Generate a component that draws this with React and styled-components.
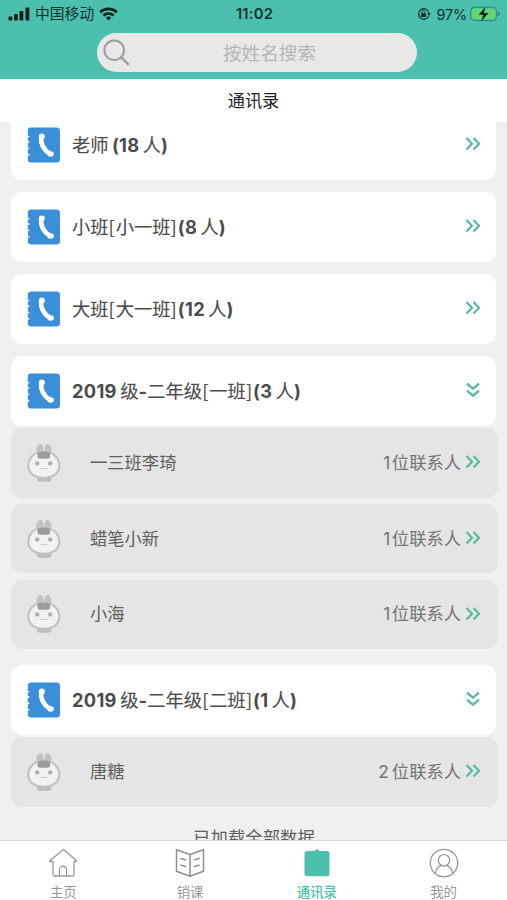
import React from "react";
import styled, { createGlobalStyle } from "styled-components";

const GlobalStyle = createGlobalStyle`
  * {
    box-sizing: border-box;
  }
  body {
    margin: 0;
    background: #f0f0f0;
    font-family: Inter, "Noto Sans CJK SC", sans-serif;
  }
`;

const groups = [
  { id: 1, name: "老师 (18 人)" },
  { id: 2, name: "小班[小一班](8 人)" },
  { id: 3, name: "大班[大一班](12 人)" },
  {
    id: 4,
    name: "2019 级-二年级[一班](3 人)",
    open: true,
    members: [
      { name: "一三班李琦", count: "1" },
      { name: "蜡笔小新", count: "1" },
      { name: "小海", count: "1" },
    ],
  },
  {
    id: 5,
    name: "2019 级-二年级[二班](1 人)",
    open: true,
    members: [{ name: "唐糖", count: "2" }],
  },
];

const Screen = styled.div`
  height: 900px;
  width: 507px;
  display: flex;
  flex-direction: column;
  overflow: hidden;
`;

const Header = styled.header`
  height: 79px;
  flex: none;
  background: #4bc1ad;
`;

const StatusBar = styled.div`
  height: 28px;
  display: grid;
  grid-template-columns: 1fr auto 1fr;
  align-items: center;
  padding: 0 6px 0 8px;
  color: #14322d;
  font-size: 15px;
`;

const StatusSide = styled.div`
  display: flex;
  align-items: center;
  justify-content: ${(props) => (props.$end ? "flex-end" : "flex-start")};
  gap: 5px;
  white-space: nowrap;
`;

const Carrier = styled.span`
  font-size: 14.8px;
  line-height: 20px;
`;

const Clock = styled.span`
  font-weight: 600;
  font-size: 14.8px;
  letter-spacing: 0.2px;
  line-height: 18px;
  padding-bottom: 1px;
`;

const Battery = styled.span`
  font-size: 14.4px;
  letter-spacing: -0.1px;
  margin-right: -2px;
`;

const SearchBox = styled.div`
  width: 320px;
  height: 39px;
  margin: 5px 0 0 97px;
  padding: 0 6px;
  border-radius: 20px;
  background: #e8e8e8;
  display: flex;
  align-items: center;
`;

const Placeholder = styled.span`
  flex: 1;
  padding-right: 2px;
  text-align: center;
  font-size: 18.6px;
  line-height: 38px;
  color: #b5b5b5;
`;

const PageTitle = styled.h1`
  height: 43px;
  flex: none;
  margin: 0;
  background: #fff;
  color: #222;
  font-size: 17.2px;
  font-weight: 400;
  line-height: 43px;
  text-align: center;
`;

const List = styled.main`
  flex: 1;
  min-height: 0;
  overflow: hidden;
  padding: 0 10px 0 11px;
`;

const Group = styled.section`
  margin-bottom: ${(props) => (props.$open ? "15.8px" : "12.4px")};

  &:first-child {
    margin-top: -12px;
  }
`;

const Card = styled.div`
  height: 69.6px;
  margin-right: 1px;
  padding: 0 14px 0 16px;
  border-radius: 11px;
  background: #fff;
  display: flex;
  align-items: center;
`;

const GroupName = styled.h2`
  flex: 1;
  margin: 0 0 0 12px;
  font-size: 18.3px;
  font-weight: 400;
  line-height: 26px;
  color: #4c4c4c;
  -webkit-text-stroke: 0.15px #4c4c4c;
  white-space: pre;
  word-spacing: -1.8px;
`;

const Latin = styled.span`
  font-weight: 700;
  letter-spacing: 0.3px;
  -webkit-text-stroke: 0;
`;

const Bracket = styled.span`
  font-family: "Noto Sans CJK SC", sans-serif;
  letter-spacing: 1px;
`;

const Member = styled.div`
  height: 69.6px;
  margin-top: 6.1px;
  margin-right: -1px;
  padding: 0 16px 0 15px;
  border-radius: 11px;
  background: #e5e5e5;
  display: flex;
  align-items: center;

  ${Card} + & {
    margin-top: 2.6px;
  }
`;

const MemberName = styled.span`
  flex: 1;
  margin-left: 28px;
  font-size: 17.3px;
  line-height: 26px;
  color: #606060;
`;

const Contacts = styled.span`
  margin-right: 4px;
  font-size: 17.3px;
  line-height: 26px;
  color: #747474;
`;

const Count = styled.span`
  display: inline-block;
  min-width: 10px;
  text-align: center;
  margin-right: ${(props) => (props.$wide ? "3px" : "0")};
`;

const EndNote = styled.p`
  margin: 3px 0 0;
  padding-top: 3px;
  font-size: 17.4px;
  line-height: 26px;
  color: #606060;
  text-align: center;
`;

const TabBar = styled.nav`
  height: 60px;
  flex: none;
  border-top: 1px solid #d4d4d4;
  background: #fff;
  display: grid;
  grid-template-columns: repeat(4, 1fr);
`;

const Tab = styled.div`
  display: flex;
  flex-direction: column;
  align-items: center;
  padding-top: 6.5px;
  font-size: 13.4px;
  line-height: 20px;
  font-weight: ${(props) => (props.$active ? 500 : 400)};
  color: ${(props) => (props.$active ? "#4bc1ad" : "#999")};

  svg {
    margin-bottom: 4px;
  }
`;

const SignalIcon = () => (
  <svg width="22" height="14" viewBox="0 0 22 14" fill="#10201d">
    <rect x="0.5" y="9.5" width="3.8" height="4" rx="1" />
    <rect x="6" y="7" width="3.8" height="6.5" rx="1" />
    <rect x="11.5" y="4" width="3.8" height="9.5" rx="1" />
    <rect x="17.5" y="0.5" width="3.8" height="13" rx="1" />
  </svg>
);

const WifiIcon = () => (
  <svg width="19" height="14" viewBox="0 0 19 14" fill="none" stroke="#10201d" strokeWidth="2.6">
    <path d="M1.2 5.2a12 12 0 0 1 16.6 0" />
    <path d="M4.4 8.5a7.4 7.4 0 0 1 10.2 0" />
    <path d="M9.5 13.5 6.9 10.8a3.8 3.8 0 0 1 5.2 0z" fill="#10201d" stroke="none" />
  </svg>
);

const LockIcon = () => (
  <svg width="14" height="14" viewBox="0 0 14 14" fill="none" stroke="#14322d">
    <path d="M11.8 8.6a5.2 5.2 0 1 1 0-3.2" strokeWidth="1.3" />
    <path d="M10 6h3.8l-1.9 2.8z" fill="#14322d" stroke="none" />
    <rect x="4" y="6.2" width="5" height="3.8" rx="0.6" fill="#14322d" stroke="none" />
    <path d="M5 6.5V5.3a1.5 1.5 0 0 1 3 0v1.2" />
  </svg>
);

const BatteryIcon = () => (
  <svg width="31" height="16" viewBox="0 0 31 16">
    <rect x="0.6" y="1.2" width="26" height="13.4" rx="4" fill="none" stroke="#2f8375" />
    <rect x="2.2" y="2.8" width="22.8" height="10.2" rx="2.5" fill="#62d66b" />
    <path d="M28 5.8c2.4.6 2.4 3.6 0 4.2z" fill="#2f8375" />
    <path d="M15.6 0.8 8.6 8.7h4.6L11.2 15.2l7.4-8.3h-4.8z" fill="#10201d" />
  </svg>
);

const SearchIcon = () => (
  <svg width="27" height="27" viewBox="0 0 27 27" fill="none" stroke="#9d9d9d" strokeWidth="2">
    <circle cx="11.2" cy="11.2" r="9.8" />
    <path d="m18.2 18.2 7.6 7.6" strokeWidth="2.4" />
  </svg>
);

const BookIcon = () => (
  <svg width="33" height="36" viewBox="0 0 33 36">
    <path
      d="M4 .5h25.500a3.500 3.500 0 0 1 3.500 3.500v28a3.500 3.500 0 0 1-3.500 3.500H4A3.300 3.300 0 0 1 .8 32v-3l2.200-1.200-2.200-1.200v-4l2.200-1.200-2.200-1.200v-4l2.200-1.200-2.200-1.200v-3l2.200-1.200L.8 9V4A3.300 3.300 0 0 1 4 .5z"
      fill="#3b8fd9"
    />
    <path
      d="M14.200 10Q12.800 20 23 27"
      fill="none"
      stroke="#fff"
      strokeWidth="4.600"
      strokeLinecap="round"
    />
    <ellipse cx="14.800" cy="9.600" rx="3" ry="3" fill="#fff" />
    <ellipse cx="23.700" cy="26.900" rx="3.200" ry="2.700" fill="#fff" />
  </svg>
);

const Avatar = () => (
  <svg width="36" height="40" viewBox="0 0 36 40">
    <rect x="11" y="33.500" width="14.500" height="5.200" rx="2.400" fill="#bcbcbc" />
    <ellipse cx="13.800" cy="6.500" rx="3.500" ry="5.500" fill="#c2c2c2" transform="rotate(8 13.800 6.500)" />
    <ellipse cx="22" cy="6.500" rx="3.500" ry="5.500" fill="#c2c2c2" transform="rotate(-8 22 6.500)" />
    <path
      d="M17.800 8.500C8 8.500 2.300 15.500 2.300 22.800c0 7.700 6.800 12 15.500 12s15.500-4.300 15.500-12C33.300 15.500 27.500 8.500 17.800 8.500z"
      fill="#f2f2f2"
      stroke="#c2c2c2"
      strokeWidth="2.200"
    />
    <path d="M11.500 9.500q6.300-2 12.600 0v4q0 2.200-2.500 2.200H14q-2.500 0-2.500-2.200z" fill="#9c9c9c" />
    <circle cx="11.200" cy="20.400" r="2.200" fill="#b0b0b0" />
    <circle cx="24.200" cy="20.400" r="2.200" fill="#b0b0b0" />
    <path d="M14.500 25.500h7" fill="none" stroke="#d0d0d0" />
  </svg>
);

const Chevrons = ({ down }) => (
  <svg width="17" height="17" viewBox="0 0 17 17" fill="none" stroke="#58b9a2" strokeWidth="2.200">
    {down ? (
      <path d="m2 1.700 6 5 6-5M2 8.700l6 5 6-5" />
    ) : (
      <path d="m1.500 2 5.500 5.700-5.500 5.700M8.500 2 14 7.700l-5.500 5.700" />
    )}
  </svg>
);

const HomeIcon = () => (
  <svg width="30" height="30" viewBox="0 0 30 30" fill="none" stroke="#999" strokeWidth="1.300" strokeLinejoin="round">
    <path d="M5 13.500v13q0 1.500 1.500 1.500h18q1.500 0 1.500-1.500v-13h2.200q.7-.3.100-1L15.500 1.500 1.800 12.700q-.4.700.3.800z" />
    <path d="M11.500 28v-6.300a3.500 3.500 0 0 1 7 0V28" />
  </svg>
);

const CourseIcon = () => (
  <svg width="30" height="30" viewBox="0 0 30 30" fill="none" stroke="#8f8f8f" strokeWidth="1.500" strokeLinejoin="round">
    <path d="M15 6.500 1.500 1.800v21.500L15 28.200l13.500-4.900V1.800zM15 6.500v21.700" />
    <path d="m5.300 10.200 5.700 1.900M5.300 16.900l5.700 1.900M24.700 10.200 19 12.100M24.700 16.900 19 18.800" />
  </svg>
);

const ContactsIcon = () => (
  <svg width="30" height="30" viewBox="0 0 30 30" fill="#4bc1ad">
    <path d="M5 3h7.500q.5-1.800 2.500-1.800T17.500 3H25q2.500 0 2.500 2.500V26q0 2.200-2.500 2.200H5q-2.500 0-2.500-2.200V5.500Q2.500 3 5 3z" />
  </svg>
);

const MineIcon = () => (
  <svg width="30" height="30" viewBox="0 0 30 30" fill="none" stroke="#999" strokeWidth="1.300">
    <circle cx="15" cy="15" r="13.700" />
    <circle cx="15" cy="12.300" r="5.700" />
    <path d="M6.200 25.300c1.300-4.800 3.700-7 6-7.600M23.800 25.300c-1.300-4.800-3.700-7-6-7.600" />
  </svg>
);

const tabs = [
  { label: "主页", icon: <HomeIcon /> },
  { label: "销课", icon: <CourseIcon /> },
  { label: "通讯录", icon: <ContactsIcon />, active: true },
  { label: "我的", icon: <MineIcon /> },
];

// digits and parentheses are bold, square brackets stay as thin as the hanzi
const renderName = (name) =>
  name.split(/([0-9()-]+|[[\]])/).map((part, i) => {
    if (/^[0-9()-]+$/.test(part)) return <Latin key={i}>{part}</Latin>;
    if (/^[[\]]$/.test(part)) return <Bracket key={i}>{part}</Bracket>;
    return part;
  });

const App = () => {
  return (
    <Screen>
      <GlobalStyle />
      <Header>
        <StatusBar>
          <StatusSide>
            <SignalIcon />
            <Carrier>中国移动</Carrier>
            <WifiIcon />
          </StatusSide>
          <Clock>11:02</Clock>
          <StatusSide $end>
            <LockIcon />
            <Battery>97%</Battery>
            <BatteryIcon />
          </StatusSide>
        </StatusBar>
        <SearchBox>
          <SearchIcon />
          <Placeholder>按姓名搜索</Placeholder>
        </SearchBox>
      </Header>
      <PageTitle>通讯录</PageTitle>
      <List>
        {groups.map((group) => (
          <Group key={group.id} $open={group.open}>
            <Card>
              <BookIcon />
              <GroupName>{renderName(group.name)}</GroupName>
              <Chevrons down={group.open} />
            </Card>
            {group.members?.map((member) => (
              <Member key={member.name}>
                <Avatar />
                <MemberName>{member.name}</MemberName>
                <Contacts>
                  <Count $wide={member.count !== "1"}>{member.count}</Count>
                  位联系人
                </Contacts>
                <Chevrons />
              </Member>
            ))}
          </Group>
        ))}
        <EndNote>已加载全部数据</EndNote>
      </List>
      <TabBar>
        {tabs.map((tab) => (
          <Tab key={tab.label} $active={tab.active}>
            {tab.icon}
            {tab.label}
          </Tab>
        ))}
      </TabBar>
    </Screen>
  );
};

export default App;
